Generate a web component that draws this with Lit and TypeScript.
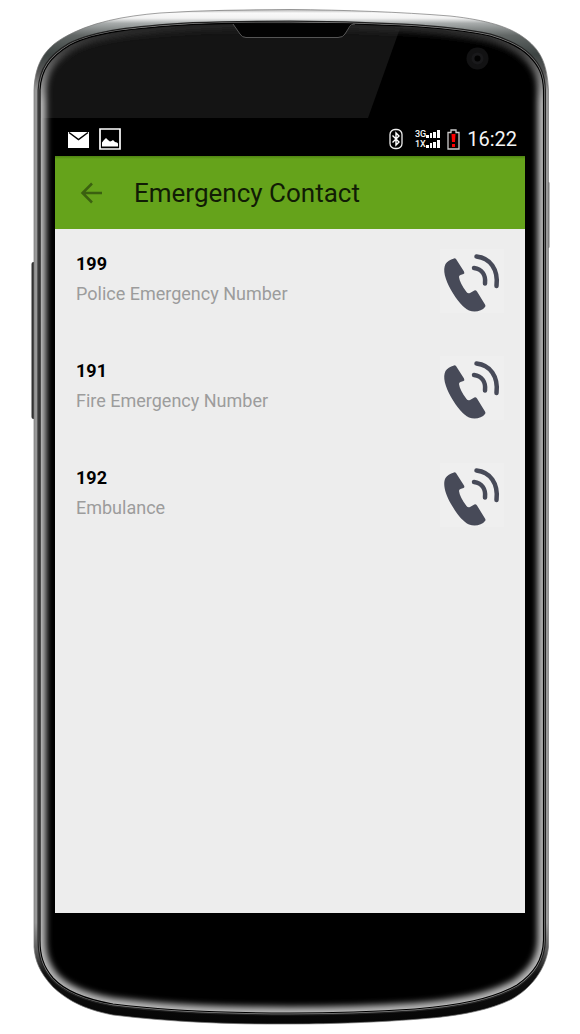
import { LitElement, html, css, svg } from "lit";
import { customElement, property } from "lit/decorators.js";

interface Contact {
  number: string;
  label: string;
}

const CONTACTS: Contact[] = [
  { number: "199", label: "Police Emergency Number" },
  { number: "191", label: "Fire Emergency Number" },
  { number: "192", label: "Embulance" },
];

const BODY =
  "M34 90C35 62 46 48 63 38C90 22 125 16 160 13C205 10 245 10 290 9.5C345 10 400 12 450 16C487 20 509 27 523 37C540 49 547 62 548.5 90V947C546 970 530 989 512 999C490 1010 460 1016 420 1019C370 1023 320 1024 290 1024C230 1024.500 170 1022 113 1015C82 1009 66 999 53 987C39 972 35 960 34 947Z";
const GLASS =
  "M40 90C41 70 50 57 70 45C95 32 135 28 193 24.500C230 23 260 23 290 23C330 23 365 24 403 26C440 28 467 31 490 36C507 41 520 47 529 56C539 66 543 75 543.500 90V940C543 960 534 973 517 985C492 999 460 1005 415 1009C370 1012 330 1013 290 1013C230 1013 160 1010 113 1004C84 999 65 991 53 978C43 966 40 955 40 940Z";

@customElement("phone-frame")
export class PhoneFrame extends LitElement {
  static styles = css`
    :host {
      display: block;
    }
    .art {
      display: block;
      width: 100%;
      height: 100%;
    }
  `;

  render() {
    return html`<svg class="art" viewBox="0 0 580 1034" preserveAspectRatio="none" aria-hidden="true">
      ${svg`
      <defs>
        <linearGradient id="rim" x1="0" y1="9" x2="0" y2="1024" gradientUnits="userSpaceOnUse">
          <stop offset="0" stop-color="#aaa"/>
          <stop offset="0.004" stop-color="#fafafa"/>
          <stop offset="0.009" stop-color="#f2f2f2"/>
          <stop offset="0.014" stop-color="#a8acac"/>
          <stop offset="0.026" stop-color="#626766"/>
          <stop offset="0.045" stop-color="#3d4443"/>
          <stop offset="0.062" stop-color="#555"/>
          <stop offset="0.08" stop-color="#999"/>
          <stop offset="0.9" stop-color="#999"/>
          <stop offset="0.93" stop-color="#555"/>
          <stop offset="0.95" stop-color="#111"/>
          <stop offset="1" stop-color="#050505"/>
        </linearGradient>
        <linearGradient id="sheen" x1="0" y1="23" x2="0" y2="1013" gradientUnits="userSpaceOnUse">
          <stop offset="0" stop-color="#222"/>
          <stop offset="0.03" stop-color="#444"/>
          <stop offset="0.08" stop-color="#bbb"/>
          <stop offset="1" stop-color="#b8b8b8"/>
        </linearGradient>
        <clipPath id="glass"><path d="${GLASS}"/></clipPath>
        <filter id="soft" x="-5%" y="-5%" width="110%" height="110%"><feGaussianBlur stdDeviation="3"/></filter>
      </defs>
      <rect x="31.500" y="262" width="4" height="157" rx="2" fill="#333"/>
      <rect x="547" y="182" width="2.500" height="66" rx="1" fill="#777"/>
      <path d="${BODY}" fill="url(#rim)"/>
      <path d="${BODY}" fill="none" stroke="#777" stroke-width="0.700"/>
      <path d="${GLASS}" fill="#000" stroke="#222" stroke-width="5"/>
      <path d="${GLASS}" fill="#000" stroke="#888" stroke-width="2.500"/>
      <g clip-path="url(#glass)">
        <path d="M40 20H403L368 118H40Z" fill="#141414"/>
        <path d="${GLASS}" fill="none" stroke="url(#sheen)" stroke-width="12" filter="url(#soft)"/>
      </g>
      <path d="${GLASS}" fill="none" stroke="#000" stroke-width="1.200"/>
      <path d="M233 23.500H353L345 33Q343 37 338 37H246Q242 37 240 34Z" fill="#030303"/>
      <path d="M233 24L240 34Q242 37.500 246 37.500H338Q343 37.500 345 34L350 26Q351 24 355 24" fill="none" stroke="#555" stroke-width="1"/>
      <circle cx="477.500" cy="58.500" r="11" fill="#121213"/>
      <circle cx="477.500" cy="58.500" r="6" fill="#19191b"/>
      <circle cx="477.500" cy="58.500" r="3" fill="#020202"/>`}
    </svg>`;
  }
}

@customElement("status-bar")
export class StatusBar extends LitElement {
  static styles = css`
    :host {
      display: flex;
      align-items: center;
      height: 38px;
      padding: 4px 8px 0 13px;
      box-sizing: border-box;
      background: #000;
      color: #f4f4f4;
    }
    .group {
      display: flex;
      align-items: center;
      gap: 10px;
    }
    .right {
      margin-left: auto;
      gap: 7px;
    }
    .bluetooth {
      margin-right: 5px;
    }
    .icon {
      display: block;
      flex: none;
    }
    .network {
      display: grid;
      grid-template-columns: auto auto;
      align-items: end;
      font-size: 9px;
      line-height: 10px;
      font-weight: 500;
    }
    .clock {
      font-size: 20px;
      line-height: 26px;
    }
  `;

  private bars() {
    return html`<svg class="icon" width="14" height="10" viewBox="0 0 14 10" aria-hidden="true">
      <path fill="#fff" d="M0 6h3v3H0zM4 4h2v5H4zM7 3h3v6H7zM11 1h3v8h-3z" />
    </svg>`;
  }

  render() {
    return html`
      <div class="group">
        <svg class="icon" width="21" height="17" viewBox="0 0 21 17" role="img" aria-label="New mail">
          <path fill="#fff" d="M0 1h21v16H0z" />
          <path d="M1 1.500l9.500 7 9.500-7" fill="none" stroke="#000" stroke-width="1.500" />
        </svg>
        <svg class="icon" width="22" height="22" viewBox="0 0 22 22" role="img" aria-label="Screenshot saved">
          <path d="M1 1h20v20H1z" fill="#000" stroke="#fff" stroke-width="1.700" />
          <path fill="#fff" d="M3 18.500v-4l2-2.500 1-1 1-1 2 2 2 1.500 1.500-.5 1.500-1 2 2 2 .5 1 1v3z" />
        </svg>
      </div>
      <div class="group right">
        <svg class="icon bluetooth" width="14" height="22" viewBox="0 0 14 22" role="img" aria-label="Bluetooth">
          <rect x="1" y="1.500" width="12" height="19" rx="5" fill="#000" stroke="#eee" stroke-width="1.300" />
          <path d="M3.500 7.500l6.500 6.500-3 3V5l3 3-6.500 6.500" fill="none" stroke="#fff" stroke-width="1.400" />
        </svg>
        <div class="network">
          <span>3G</span>${this.bars()}
          <span>1X</span>${this.bars()}
        </div>
        <svg class="icon" width="13" height="21" viewBox="0 0 13 21" role="img" aria-label="Battery low">
          <path d="M1 3.500h3V1h5v2.500h3V20H1z" fill="#090000" stroke="#ccc" stroke-width="1.300" />
          <path fill="#f00" d="M4.500 5h4L8 13H5zM5 15h3v3H5z" />
        </svg>
        <time class="clock" datetime="16:22">16:22</time>
      </div>
    `;
  }
}

@customElement("contact-row")
export class ContactRow extends LitElement {
  @property() number = "";
  @property() label = "";

  static styles = css`
    :host {
      display: flex;
      align-items: flex-start;
      justify-content: space-between;
      height: 107px;
      padding: 20px 21px 0;
      box-sizing: border-box;
    }
    .number,
    .label {
      margin: 0;
      font-size: 18px;
      line-height: 30px;
    }
    .number {
      color: #000;
      font-weight: 700;
    }
    .label {
      color: #9c9c9c;
    }
    .call,
    .icon {
      display: block;
    }
    .call {
      background: #efefef;
    }
  `;

  render() {
    return html`
      <div>
        <h2 class="number">${this.number}</h2>
        <p class="label">${this.label}</p>
      </div>
      <a class="call" href="tel:${this.number}" aria-label="Call ${this.label}">
        <svg class="icon" width="64" height="64" viewBox="0 0 64 64" aria-hidden="true">
          <path
            fill="#474a58"
            d="M14 9.500Q8 11 5.500 15C2.500 21 5 30 11 41C17 51.500 23 58.500 29 61.500C35 64 42 62 45 58Q46 57 45 55.500L37 42.500Q35.500 40.500 33.500 42L30 44Q28 45 26.500 43C22 37 19.500 32 19 28Q19 26.500 20.500 26L23.500 25Q25 24.500 24 22.500L16 10Q15 9 14 9.500Z"
          />
          <g fill="none" stroke="#474a58" stroke-width="4.500" stroke-linecap="round">
            <path d="M34 19C42 20 46 26 45 34.500" />
            <path d="M36.500 7.500C50 9 58.500 20 56.500 37" />
          </g>
        </svg>
      </a>
    `;
  }
}

@customElement("app-root")
export class AppRoot extends LitElement {
  static styles = css`
    :host {
      display: block;
      background: #fff;
      font-family: Roboto, "Liberation Sans", sans-serif;
    }
    .device {
      position: relative;
      display: flex;
      box-sizing: border-box;
      min-height: 100vh;
      padding: 118px 55px 121px;
    }
    .frame {
      position: absolute;
      inset: 0;
    }
    .screen {
      position: relative;
      flex: 1;
      display: flex;
      flex-direction: column;
      background: #ededed;
    }
    .toolbar {
      display: flex;
      align-items: center;
      gap: 28px;
      height: 73px;
      padding: 0 22px;
      background: linear-gradient(#4f8412, #65a31b 3px);
    }
    .back {
      display: block;
      padding: 0;
      border: 0;
      background: none;
      cursor: pointer;
    }
    .icon {
      display: block;
    }
    .title {
      margin: 0;
      color: #111c05;
      font-size: 26px;
      line-height: 32px;
      font-weight: 400;
    }
    .list {
      margin: 0;
      padding: 0;
      list-style: none;
    }
  `;

  render() {
    return html`
      <div class="device">
        <phone-frame class="frame"></phone-frame>
        <main class="screen">
          <status-bar></status-bar>
          <header class="toolbar">
            <button class="back" type="button" aria-label="Back">
              <svg class="icon" width="29" height="24" viewBox="0 0 29 24" aria-hidden="true">
                <path d="M25 12H6M15 2.500L5.500 12L15 21.500" fill="none" stroke="#3b6110" stroke-width="2.500" />
              </svg>
            </button>
            <h1 class="title">Emergency Contact</h1>
          </header>
          <ul class="list">
            ${CONTACTS.map(
              (c) => html`<li><contact-row .number=${c.number} .label=${c.label}></contact-row></li>`
            )}
          </ul>
        </main>
      </div>
    `;
  }
}
